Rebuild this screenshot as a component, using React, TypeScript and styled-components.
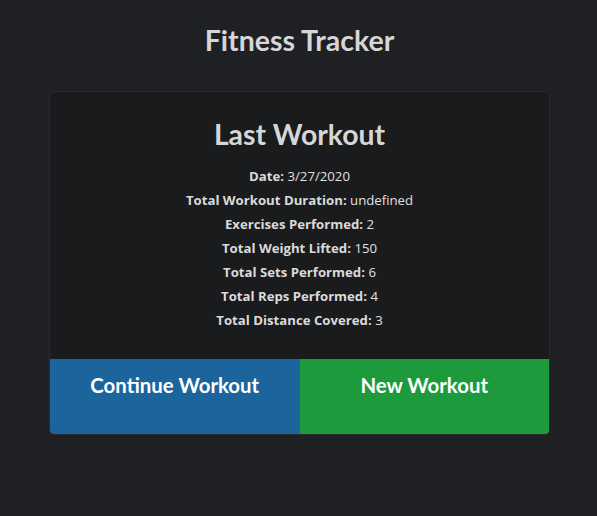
import React from "react";
import styled, { createGlobalStyle } from "styled-components";

const Global = createGlobalStyle`
  html, body { margin: 0; padding: 0; background: #1f2023; }
  body { font-family: Lato, "Open Sans", sans-serif; color: #dcdcdc; }
`;

const Page = styled.div`
  min-height: 516px;
  display: flex;
  flex-direction: column;
  align-items: center;
  padding: 22px 0 0 2px;
  box-sizing: border-box;
`;

const Title = styled.h1`
  margin: 0 0 33px;
  font-size: 28.5px;
  font-weight: 700;
  line-height: 36px;
  color: #d6d6d6;
`;

const Card = styled.div`
  width: 501px;
  box-sizing: border-box;
  background: #1a1b1d;
  border: 1px solid #2a2b2e;
  border-radius: 5px;
  overflow: hidden;
  display: flex;
  flex-direction: column;
`;

const Body = styled.div`
  padding: 24px 20px 27px;
  display: flex;
  flex-direction: column;
  align-items: center;
`;

const CardTitle = styled.h2`
  margin: 0 0 12px;
  font-size: 28.4px;
  font-weight: 700;
  line-height: 36px;
  color: #d6d6d6;
`;

const Stat = styled.p`
  margin: 0;
  font-family: "Open Sans", sans-serif;
  font-size: 13.2px;
  line-height: 24px;
  color: #e0e0e0;
  b { font-weight: 700; color: #dadada; }
`;

const Actions = styled.div`
  display: grid;
  grid-template-columns: 1fr 1fr;
`;

const ActionButton = styled.button<{ $tone: string }>`
  height: 75px;
  border: none;
  margin: 0;
  background: ${(p) => p.$tone};
  color: #ffffff;
  font-family: Lato, sans-serif;
  font-size: 20.4px;
  font-weight: 700;
  display: flex;
  justify-content: center;
  align-items: flex-start;
  padding-top: 14px;
  cursor: pointer;
`;

const stats: [string, string][] = [
  ["Date", "3/27/2020"],
  ["Total Workout Duration", "undefined"],
  ["Exercises Performed", "2"],
  ["Total Weight Lifted", "150"],
  ["Total Sets Performed", "6"],
  ["Total Reps Performed", "4"],
  ["Total Distance Covered", "3"],
];

export default function App() {
  return (
    <>
      <Global />
      <Page>
        <Title>Fitness Tracker</Title>
        <Card>
          <Body>
            <CardTitle>Last Workout</CardTitle>
            {stats.map(([k, v]) => (
              <Stat key={k}>
                <b>{k}:</b> {v}
              </Stat>
            ))}
          </Body>
          <Actions>
            <ActionButton $tone="#1b659c">Continue Workout</ActionButton>
            <ActionButton $tone="#1d9b3c">New Workout</ActionButton>
          </Actions>
        </Card>
      </Page>
    </>
  );
}
